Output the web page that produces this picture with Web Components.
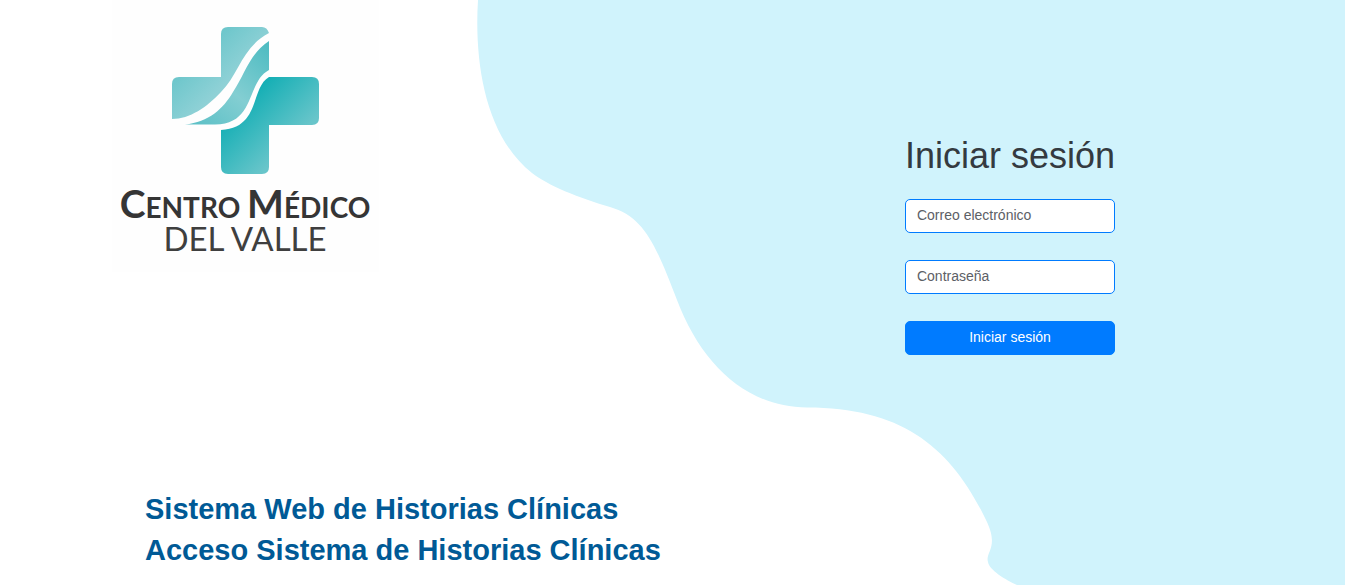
<!DOCTYPE html>
<html lang="es">
<head>
<meta charset="utf-8">
<meta name="viewport" content="width=device-width, initial-scale=1">
<title>Centro Médico del Valle</title>
<style>
  body { margin: 0; background: #fff; font-family: "Liberation Sans", Arial, sans-serif; }
</style>
</head>
<body>
<login-page>
  <clinic-logo slot="brand"></clinic-logo>
  <system-titles slot="titles">
    <h2>Sistema Web de Historias Clínicas</h2>
    <h2>Acceso Sistema de Historias Clínicas</h2>
  </system-titles>
  <login-form slot="form">Iniciar sesión</login-form>
</login-page>

<template id="login-page">
  <style>
    :host { display: block; position: relative; overflow: hidden; }
    wave-backdrop { position: absolute; inset: 0; }
    main {
      position: relative; box-sizing: border-box; min-height: 100vh;
      display: grid; grid-template-columns: 1fr 1fr; column-gap: 5px;
    }
    .intro { display: flex; flex-direction: column; justify-content: space-between; gap: 24px; min-width: 0; padding-bottom: 14px; }
    .access { display: flex; justify-content: center; align-items: flex-start; padding-top: 134px; }
  </style>
  <wave-backdrop></wave-backdrop>
  <main>
    <section class="intro"><slot name="brand"></slot><slot name="titles"></slot></section>
    <section class="access"><slot name="form"></slot></section>
  </main>
</template>

<template id="wave-backdrop">
  <style>
    :host { display: block; }
    svg { display: block; width: 100%; height: 100%; }
  </style>
  <svg viewBox="0 0 1345 585" preserveAspectRatio="none" aria-hidden="true">
    <path fill="#d0f3fc" d="M478 0C474 64 486 137 532 173C547 185 579 198 610 207C645 217 656 246 677 300C701 363 745 407 807 407.500C905 407.500 953 450 987 522C999 548 985 552 988 562C989 570 1006 580 1017 585H1345V0Z"/>
  </svg>
</template>

<template id="clinic-logo">
  <style>
    :host { display: block; margin-left: 112px; width: 267px; background: #fefefe; }
    svg { display: block; width: 100%; }
    text { font-family: Lato, sans-serif; fill: #353535; text-anchor: middle; }
    .name { font-size: 28px; font-weight: 700; }
    .name .cap { font-size: 39px; }
    .place { font-size: 33px; font-weight: 400; fill: #3f3f3f; }
  </style>
  <svg viewBox="112 0 267 272" role="img" aria-label="Centro Médico del Valle">
    <defs>
      <linearGradient id="left" gradientUnits="userSpaceOnUse" x1="196" y1="50" x2="228" y2="82">
        <stop offset="0" stop-color="#69c5ca"/><stop offset="1" stop-color="#8fd1d6"/>
      </linearGradient>
      <linearGradient id="mid" gradientUnits="userSpaceOnUse" x1="268" y1="46" x2="200" y2="126">
        <stop offset="0" stop-color="#4fbcc2"/><stop offset=".55" stop-color="#83ced2"/><stop offset="1" stop-color="#5fc1c7"/>
      </linearGradient>
      <linearGradient id="deep" gradientUnits="userSpaceOnUse" x1="245" y1="101" x2="289" y2="145">
        <stop offset="0" stop-color="#15afb5"/><stop offset="1" stop-color="#68c5ca"/>
      </linearGradient>
    </defs>
    <path fill="url(#left)" d="M172 119V84Q172 77 179 77H221V34Q221 27 228 27H262Q267 27 269 33C242 47 239 74 221 92C207 107 190 119 172 119Z"/>
    <path fill="url(#mid)" d="M269 41V70C246 82 256 124.500 215 124.500H185C209 122 223 109 233 92C245 74 250 53 269 41Z"/>
    <path fill="url(#deep)" d="M269 77H312Q319 77 319 84V118Q319 125 312 125H269V167Q269 174 262 174H228Q221 174 221 167V130C261 128 250 88 269 77Z"/>
    <text class="name" x="245" y="218"><tspan class="cap">C</tspan>ENTRO <tspan class="cap">M</tspan>ÉDICO</text>
    <text class="place" x="245" y="251">DEL VALLE</text>
  </svg>
</template>

<template id="system-titles">
  <style>
    :host { display: block; margin-left: 145px; color: #005a96; }
    ::slotted(h2) { margin: 0; font-size: 29px; line-height: 41px; font-weight: 700; }
  </style>
  <slot></slot>
</template>

<template id="login-form">
  <style>
    :host { display: block; color: #343a40; }
    form { display: grid; gap: 27px; }
    h1 { margin: 0 0 -6px; font-size: 36px; line-height: 44px; font-weight: 400; white-space: nowrap; }
    input, button {
      box-sizing: border-box; width: 100%; min-width: 0; height: 34px; margin: 0;
      border: 1px solid #007bff; border-radius: 5px;
      font-family: inherit; font-size: 14px; line-height: 20px;
    }
    input { padding: 5px 11px 7px; background: #fff; color: #495057; }
    input::placeholder { color: #5c6066; opacity: 1; }
    button { padding: 5px 12px 7px; background: #007bff; color: #fff; cursor: pointer; }
  </style>
  <form>
    <h1><slot></slot></h1>
    <input type="email" name="email" aria-label="Correo electrónico" placeholder="Correo electrónico" autocomplete="username">
    <input type="password" name="password" aria-label="Contraseña" placeholder="Contraseña" autocomplete="current-password">
    <button type="submit">Iniciar sesión</button>
  </form>
</template>

<script>
  class TemplateElement extends HTMLElement {
    constructor() {
      super();
      const template = document.getElementById(this.localName);
      this.attachShadow({ mode: "open" }).append(template.content.cloneNode(true));
    }
  }
  class WaveBackdrop extends TemplateElement {}
  class ClinicLogo extends TemplateElement {}
  class SystemTitles extends TemplateElement {}
  class LoginForm extends TemplateElement {
    connectedCallback() {
      this.shadowRoot.querySelector("form").addEventListener("submit", (event) => {
        event.preventDefault();
        this.dispatchEvent(new CustomEvent("login", { bubbles: true }));
      });
    }
  }
  class LoginPage extends TemplateElement {}

  customElements.define("wave-backdrop", WaveBackdrop);
  customElements.define("clinic-logo", ClinicLogo);
  customElements.define("system-titles", SystemTitles);
  customElements.define("login-form", LoginForm);
  customElements.define("login-page", LoginPage);
</script>
</body>
</html>
